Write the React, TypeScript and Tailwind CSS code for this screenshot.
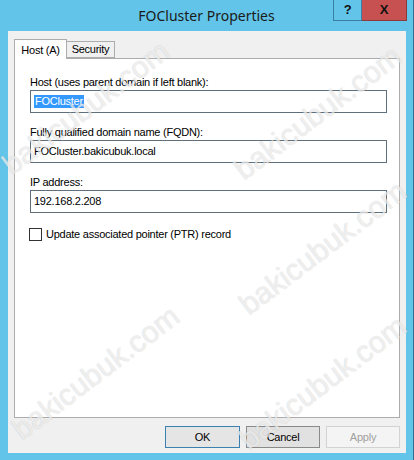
import React from 'react';

const Field: React.FC<{ label: string; children: React.ReactNode }> = ({ label, children }) => (
  <div className="flex flex-col">
    <label className="h-[16px] leading-[16px] pl-[15px]">{label}</label>
    <div className="ml-[15px] w-[357px] h-[23px] border border-[#5f6f7c] bg-white flex items-center pl-[3px]">
      {children}
    </div>
  </div>
);

const Watermark: React.FC<{ className: string }> = ({ className }) => (
  <div
    aria-hidden
    className={`absolute origin-bottom-left rotate-[-37deg] whitespace-nowrap pointer-events-none select-none text-[30px] leading-none tracking-normal text-white/70 [text-shadow:0_0_1px_rgba(0,0,0,0.22)] ${className}`}
  >
    bakicubuk.com
  </div>
);

export default function App() {
  return (
    <div className="w-[414px] h-[460px] bg-[#62c4e8] border-r border-[#2f6f8f] relative overflow-hidden font-['Liberation_Sans',Arial,sans-serif] text-[11px] tracking-[-0.25px] text-black">
      {/* title bar */}
      <div className="h-[31px] relative flex items-center justify-center">
        <span className="font-['Noto_Sans',sans-serif] text-[14px] tracking-normal text-[#1a1a1a] -mt-[1px]">FOCluster Properties</span>
        <div className="absolute top-0 right-[6px] flex">
          <div className="w-[29px] h-[21px] border border-[#3a7fa6] border-t-0 flex items-center justify-center font-bold text-[13px] text-[#111]">?</div>
          <div className="w-[45px] h-[21px] bg-[#c75050] border border-[#8f3a3a] border-t-0 border-l-0 flex items-center justify-center font-bold text-[13px] text-[#111]">X</div>
        </div>
      </div>

      {/* client area */}
      <div className="mx-[8px] w-[398px] h-[422px] bg-[#f0f0f0] flex flex-col">
        {/* tabs */}
        <div className="flex items-end pl-[6px] pt-[7px] h-[27px]">
          <div className="w-[53px] h-[20px] bg-white border border-[#acacac] border-b-0 flex items-start justify-center pt-[2px] relative z-10 -mb-[1px]">
            Host (A)
          </div>
          <div className="w-[48px] h-[17px] bg-[#f0f0f0] border border-[#acacac] border-l-0 flex items-center justify-center">
            Security
          </div>
        </div>

        {/* tab page */}
        <div className="mx-[6px] w-[386px] h-[360px] bg-white border border-[#acacac] flex flex-col pt-[15px] gap-[11px]">
          <Field label="Host (uses parent domain if left blank):">
            <span className="bg-[#3399ff] text-white px-[1px] leading-[13px]">FOCluster</span>
          </Field>
          <Field label="Fully qualified domain name (FQDN):">
            <span>FOCluster.bakicubuk.local</span>
          </Field>
          <Field label="IP address:">
            <span>192.168.2.208</span>
          </Field>
          <div className="flex items-center pl-[14px] mt-[2px] gap-[4px]">
            <div className="w-[13px] h-[13px] border border-[#333] bg-white" />
            <span>Update associated pointer (PTR) record</span>
          </div>
        </div>

        {/* buttons */}
        <div className="flex justify-end gap-[6px] pr-[6px] mt-[8px]">
          <button className="w-[75px] h-[22px] bg-[#e5e5e5] border border-[#3c7fb1] text-black">OK</button>
          <button className="w-[74px] h-[22px] bg-[#e1e1e1] border border-[#8a8a8a] text-black">Cancel</button>
          <button className="w-[74px] h-[22px] bg-[#f4f4f4] border border-[#d3d3d3] text-[#a0a0a0]">Apply</button>
        </div>
      </div>

      {/* watermark overlay */}
      <Watermark className="left-[15px] top-[150px]" />
      <Watermark className="left-[247px] top-[155px]" />
      <Watermark className="left-[252px] top-[290px]" />
      <Watermark className="left-[25px] top-[415px]" />
      <Watermark className="left-[252px] top-[425px]" />
    </div>
  );
}
